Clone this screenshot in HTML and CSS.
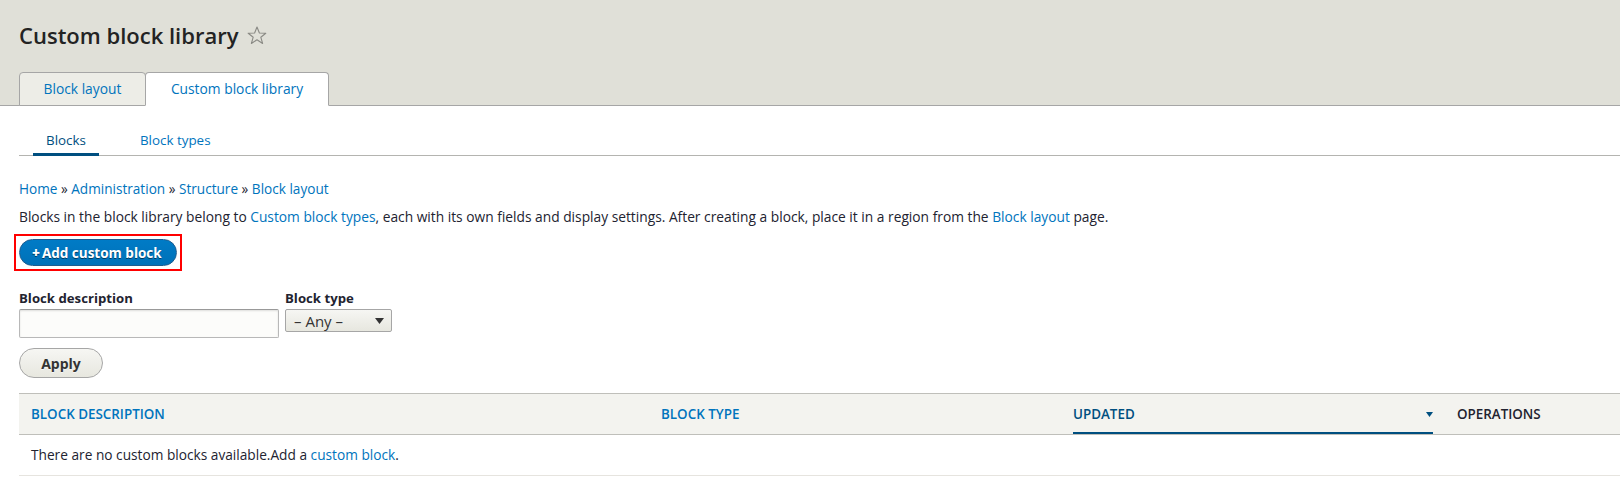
FILE: index.html
```html
<!DOCTYPE html>
<html lang="en">
<head>
<meta charset="utf-8">
<title>Custom block library</title>
<link rel="stylesheet" href="styles.css">
</head>
<body>
<header class="page-header">
  <div class="title-row">
    <h1 class="page-title">Custom block library</h1>
    <span class="shortcut-star" aria-label="Add to shortcuts">
      <svg width="20" height="19" viewBox="0 0 20 19"><polygon points="10,1 12.4,7 18.8,7.2 13.8,11.2 15.6,17.5 10,13.8 4.4,17.5 6.2,11.2 1.2,7.2 7.6,7" fill="none" stroke="#8a8a85" stroke-width="1.1" stroke-linejoin="round"/></svg>
    </span>
  </div>
  <nav class="primary-tabs">
    <ul class="tabs">
      <li class="tab"><a href="#">Block layout</a></li>
      <li class="tab is-active"><a href="#">Custom block library</a></li>
    </ul>
  </nav>
</header>

<nav class="secondary-tabs">
  <ul class="subtabs">
    <li class="subtab is-active"><a href="#">Blocks</a></li>
    <li class="subtab"><a href="#">Block types</a></li>
  </ul>
</nav>

<main class="content">
  <nav class="breadcrumb">
    <a href="#">Home</a> <span class="sep">»</span> <a href="#">Administration</a> <span class="sep">»</span> <a href="#">Structure</a> <span class="sep">»</span> <a href="#">Block layout</a>
  </nav>
  <p class="help">Blocks in the block library belong to <a href="#">Custom block types</a>, each with its own fields and display settings. After creating a block, place it in a region from the <a href="#">Block layout</a> page.</p>

  <div class="action-row">
    <span class="highlight">
      <a href="#" class="button button--primary"><span class="plus">+</span>Add custom block</a>
    </span>
  </div>

  <form class="filters">
    <div class="filter-items">
      <div class="form-item">
        <label class="form-label">Block description</label>
        <input type="text" class="form-text">
      </div>
      <div class="form-item">
        <label class="form-label">Block type</label>
        <div class="form-select">
          <span class="select-value">– Any –</span>
          <svg class="select-arrow" width="9" height="6" viewBox="0 0 9 6"><polygon points="0,0 9,0 4.5,6" fill="#333"/></svg>
        </div>
      </div>
    </div>
    <button type="button" class="button button--apply">Apply</button>
  </form>

  <table class="listing">
    <colgroup>
      <col class="col-desc"><col class="col-type"><col class="col-updated"><col class="col-ops">
    </colgroup>
    <thead>
      <tr>
        <th><a href="#">Block description</a></th>
        <th><a href="#">Block type</a></th>
        <th class="is-active"><a href="#"><span>Updated</span><svg width="7" height="5" viewBox="0 0 7 5"><polygon points="0,0 7,0 3.5,5" fill="#004f80"/></svg></a></th>
        <th class="plain">Operations</th>
      </tr>
    </thead>
    <tbody>
      <tr>
        <td colspan="4">There are no custom blocks available.Add a <a href="#">custom block</a>.</td>
      </tr>
    </tbody>
  </table>
</main>
</body>
</html>
```

FILE: styles.css
```css
* { box-sizing: border-box; }

html, body {
  margin: 0;
  padding: 0;
  background: #ffffff;
}

body {
  font-family: "Open Sans", "Noto Sans", sans-serif;
  font-size: 13.5px;
  color: #222330;
  line-height: 20px;
}

a {
  color: #0074bd;
  text-decoration: none;
}

/* ---------- header ---------- */
.page-header {
  background: #e0e0d8;
  padding-top: 20px;
}

.title-row {
  display: flex;
  align-items: center;
  gap: 9px;
  padding-left: 19px;
  height: 30px;
}

.page-title {
  margin: 0;
  font-size: 22px;
  font-weight: 600;
  line-height: 30px;
  color: #232323;
}

.shortcut-star {
  display: flex;
  align-items: center;
}

.primary-tabs {
  margin-top: 22px;
}

.tabs {
  list-style: none;
  margin: 0;
  padding: 0 0 0 19px;
  display: flex;
  border-bottom: 1px solid #a6a6a6;
  height: 34px;
}

.tab {
  height: 34px;
  border: 1px solid #a6a6a6;
  border-radius: 4px 4px 0 0;
  background: #ededE7;
  margin-bottom: -1px;
}

.tab + .tab {
  margin-left: -1px;
}

.tab a {
  display: block;
  padding: 0 25px;
  line-height: 32px;
  font-size: 13.8px;
}

.tab:first-child a {
  padding: 0 23.5px;
}

.tab.is-active {
  background: #ffffff;
  border-bottom-color: #ffffff;
  position: relative;
}

/* ---------- secondary tabs ---------- */
.secondary-tabs {
  padding-left: 19px;
}

.subtabs {
  list-style: none;
  margin: 0;
  padding: 0 0 0 14px;
  display: flex;
  gap: 28px;
  border-bottom: 1px solid #b4b4b0;
}

.subtab {
  margin-bottom: -1px;
}

.subtab a {
  display: block;
  padding: 24px 13px 3px;
  line-height: 20px;
  border-bottom: 3px solid transparent;
  font-size: 13.4px;
}

.subtab.is-active a {
  color: #004f80;
  border-bottom-color: #004f80;
}

/* ---------- content ---------- */
.content {
  padding-left: 19px;
}

.breadcrumb {
  margin-top: 23px;
  line-height: 20px;
  font-size: 13.6px;
}

.breadcrumb .sep {
  color: #222330;
}

.help {
  margin: 8px 0 0;
  line-height: 20px;
  font-size: 13.78px;
}

.action-row {
  margin-top: 7px;
  display: flex;
}

.highlight {
  display: inline-flex;
  border: 2px solid #ff0000;
  padding: 3px;
  margin-left: -5px;
}

.button {
  display: inline-flex;
  align-items: center;
  font-family: "Open Sans", "Noto Sans", sans-serif;
  font-weight: 700;
  border-radius: 20em;
  cursor: pointer;
}

.button--primary {
  height: 27px;
  padding: 0 14px 0 12px;
  font-size: 13.5px;
  color: #ffffff;
  background: linear-gradient(to bottom, #007bc6, #0071b8);
  border: 1px solid #1e5c90;
  text-shadow: 0 1px rgba(0, 0, 0, 0.5);
}

.button--primary .plus {
  font-weight: 800;
  padding-right: 2px;
}

/* ---------- filters ---------- */
.filters {
  margin-top: 17px;
}

.filter-items {
  display: flex;
  gap: 6px;
  align-items: flex-start;
}

.form-item {
  display: flex;
  flex-direction: column;
  gap: 1px;
}

.form-label {
  font-weight: 700;
  font-size: 13.2px;
  line-height: 20px;
  color: #222330;
}

.form-text {
  width: 260px;
  height: 29px;
  border: 1px solid #b8b8b8;
  border-top-color: #999;
  border-radius: 2px;
  background: #fcfcfa;
  box-shadow: inset 0 1px 2px rgba(0, 0, 0, 0.12);
  font: inherit;
  margin: 0;
}

.form-select {
  width: 107px;
  height: 23px;
  display: flex;
  align-items: center;
  justify-content: space-between;
  padding: 0 7px 0 8px;
  border: 1px solid #a6a6a6;
  border-radius: 2px;
  background: linear-gradient(to bottom, #f6f6f3, #e7e7df);
  color: #333;
  font-size: 15px;
}

.button--apply {
  margin-top: 10px;
  height: 30px;
  width: 84px;
  justify-content: center;
  padding: 0;
  font-size: 14px;
  color: #333333;
  background: linear-gradient(to bottom, #f6f6f3, #e7e7df);
  border: 1px solid #a6a6a6;
  text-shadow: 0 1px rgba(255, 255, 255, 0.6);
}

/* ---------- table ---------- */
.listing {
  margin-top: 15px;
  width: 100%;
  border-collapse: collapse;
  table-layout: fixed;
}

.col-desc { width: 630px; }
.col-type { width: 412px; }
.col-updated { width: 384px; }
.col-ops { width: auto; }

.listing thead tr {
  background: #f3f3ef;
  border-top: 1px solid #bfbfba;
  border-bottom: 1px solid #bfbfba;
}

.listing th {
  height: 40px;
  padding: 0 12px;
  text-align: left;
  font-weight: 600;
  font-size: 13.4px;
  text-transform: uppercase;
}

.listing th a {
  display: flex;
  align-items: center;
  justify-content: space-between;
  height: 40px;
}

.listing th.is-active a {
  color: #004f80;
  border-bottom: 2px solid #004f80;
  padding-top: 2px;
}

.listing th.plain {
  color: #222330;
}

.listing td {
  height: 41px;
  padding: 0 12px;
  border-bottom: 1px solid #e6e4df;
  font-size: 13.7px;
}
```
